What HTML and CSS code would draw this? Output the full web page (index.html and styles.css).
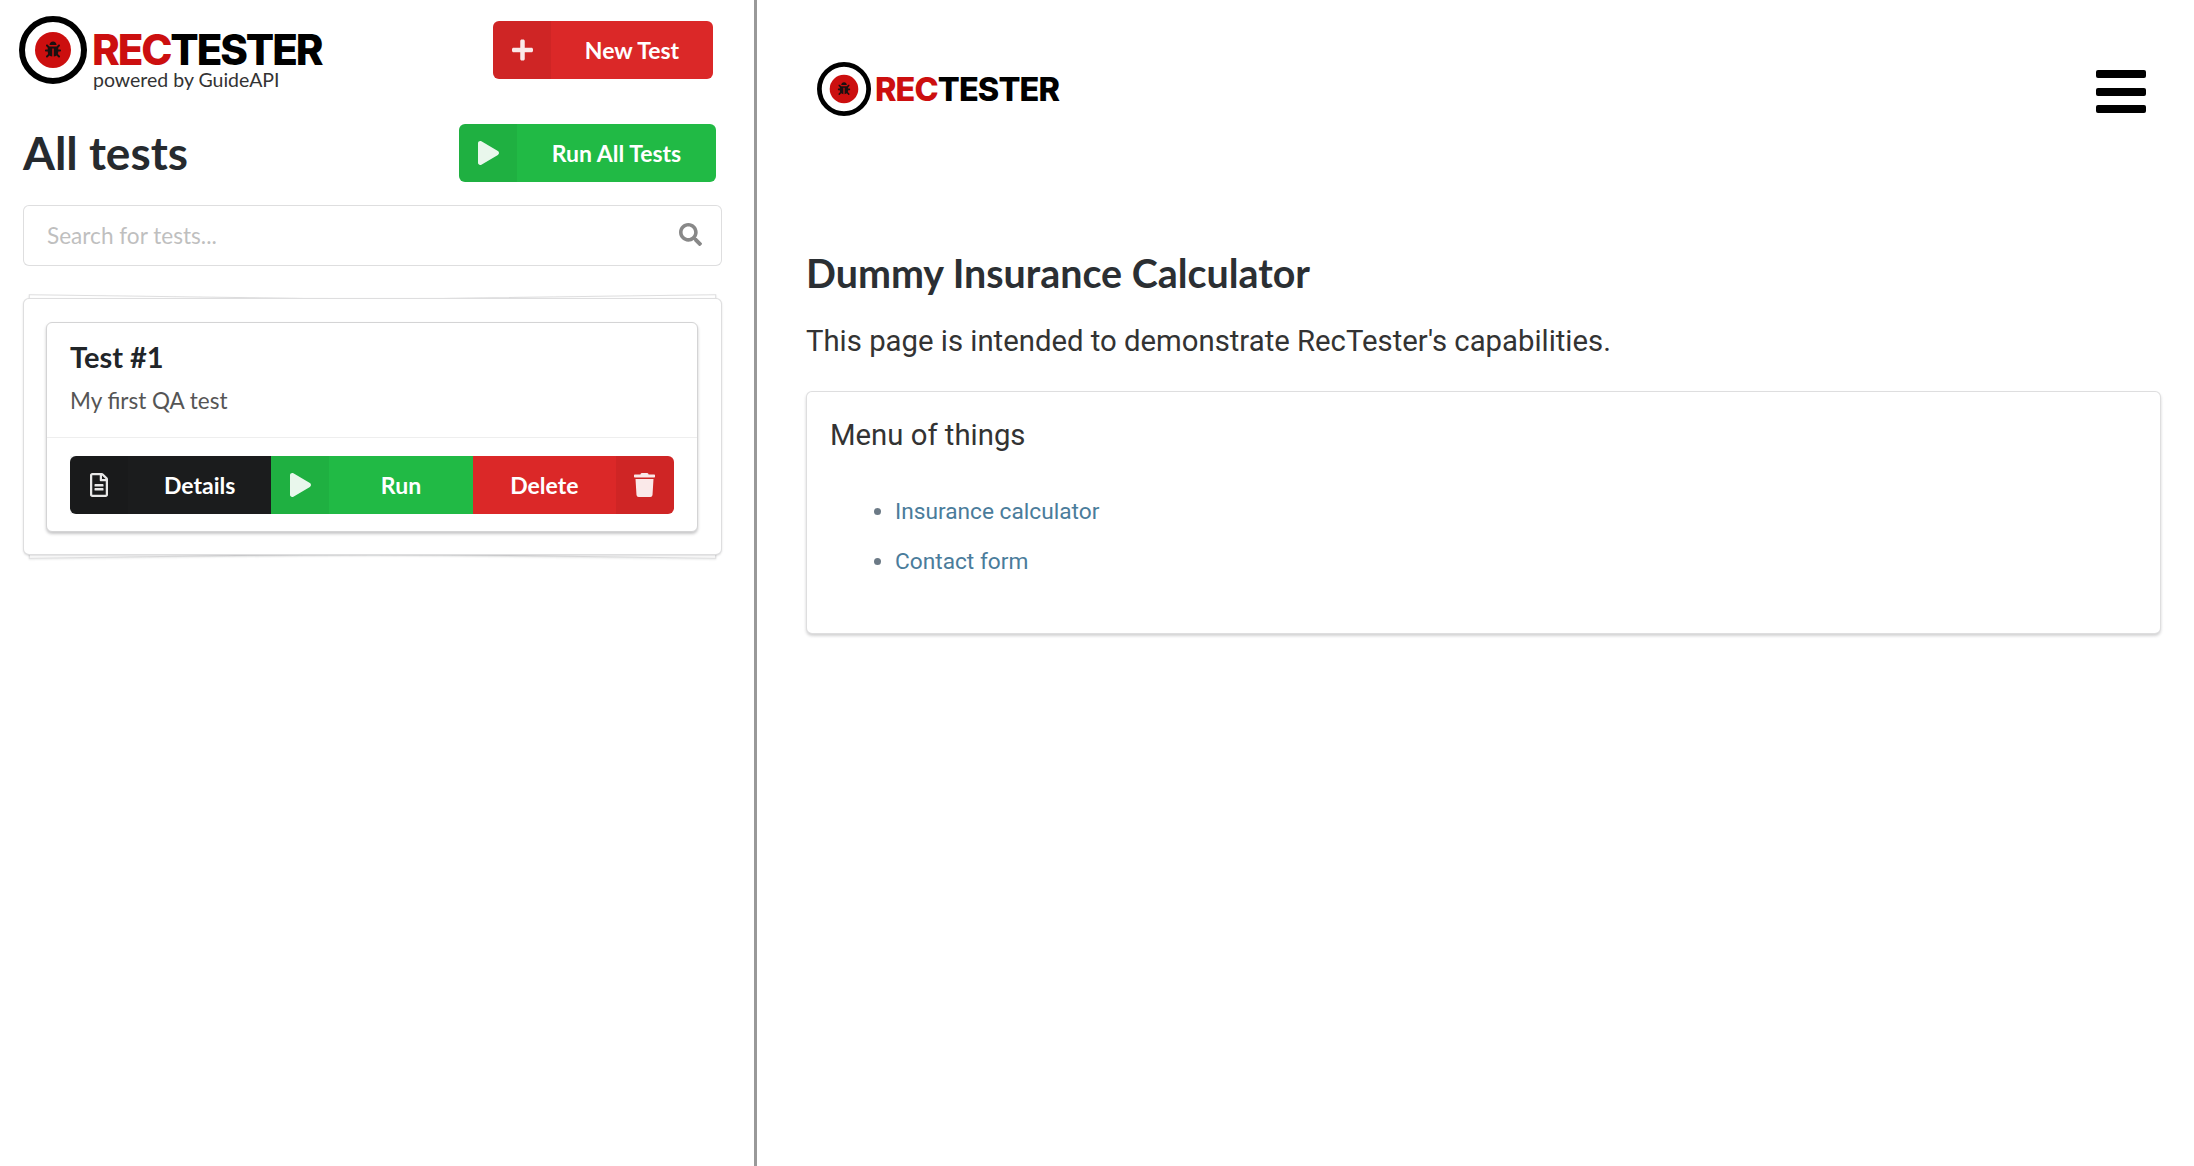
FILE: index.html
```html
<!DOCTYPE html>
<html lang="en">
<head>
    <meta charset="UTF-8">
    <meta name="viewport" content="width=device-width, initial-scale=1.0">
    <title>RecTester</title>
    <link rel="stylesheet" href="styles.css">
</head>
<body>

    <svg class="sprites" aria-hidden="true">
        <symbol id="i-plus" viewBox="0 0 448 512"><path d="M416 208H272V64c0-17.67-14.33-32-32-32h-32c-17.67 0-32 14.33-32 32v144H32c-17.67 0-32 14.33-32 32v32c0 17.67 14.33 32 32 32h144v144c0 17.67 14.33 32 32 32h32c17.67 0 32-14.33 32-32V304h144c17.67 0 32-14.33 32-32v-32c0-17.67-14.33-32-32-32z"/></symbol>
        <symbol id="i-play" viewBox="0 0 448 512"><path d="M424.4 214.7L72.4 6.6C43.8-10.3 0 6.1 0 47.9V464c0 37.5 40.7 60.1 72.4 41.3l352-208c31.4-18.5 31.5-64.1 0-82.6z"/></symbol>
        <symbol id="i-trash" viewBox="0 0 448 512"><path d="M432 32H312l-9.4-18.7A24 24 0 0 0 281.1 0H166.8a23.72 23.72 0 0 0-21.4 13.3L136 32H16A16 16 0 0 0 0 48v32a16 16 0 0 0 16 16h416a16 16 0 0 0 16-16V48a16 16 0 0 0-16-16zM53.2 467a48 48 0 0 0 47.9 45h245.8a48 48 0 0 0 47.9-45L416 128H32z"/></symbol>
        <symbol id="i-search" viewBox="0 0 512 512"><path d="M505 442.7L405.3 343c-4.5-4.5-10.6-7-17-7H372c27.6-35.3 44-79.7 44-128C416 93.1 322.9 0 208 0S0 93.1 0 208s93.1 208 208 208c48.3 0 92.7-16.4 128-44v16.3c0 6.4 2.5 12.5 7 17l99.7 99.7c9.4 9.4 24.6 9.4 33.9 0l28.3-28.3c9.4-9.4 9.4-24.6.1-34zM208 336c-70.7 0-128-57.2-128-128 0-70.7 57.2-128 128-128 70.7 0 128 57.2 128 128 0 70.7-57.2 128-128 128z"/></symbol>
        <symbol id="i-file" viewBox="0 0 384 512"><path d="M288 248v28c0 6.6-5.4 12-12 12H108c-6.6 0-12-5.4-12-12v-28c0-6.6 5.4-12 12-12h168c6.6 0 12 5.4 12 12zm-12 72H108c-6.6 0-12 5.4-12 12v28c0 6.6 5.4 12 12 12h168c6.6 0 12-5.4 12-12v-28c0-6.6-5.4-12-12-12zm108-188.1V464c0 26.5-21.5 48-48 48H48c-26.5 0-48-21.5-48-48V48C0 21.5 21.5 0 48 0h204.1C264.8 0 277 5.1 286 14.1L369.9 98c9 8.9 14.1 21.2 14.1 33.9zm-128-80V128h76.1L256 51.9zM336 464V176H232c-13.3 0-24-10.7-24-24V48H48v416h288z"/></symbol>
        <symbol id="i-logo" viewBox="0 0 68 68">
            <circle cx="34" cy="34" r="31" fill="none" stroke="#000" stroke-width="6"/>
            <circle cx="34" cy="34" r="18" fill="#cc0f0f"/>
            <svg x="26" y="25" width="16" height="17" viewBox="0 0 512 512"><path fill="#1a1010" d="M511.988 288.9c-.478 17.43-15.217 31.1-32.653 31.1H424v16c0 21.864-4.882 42.584-13.6 61.145l60.228 60.228c12.496 12.497 12.496 32.758 0 45.255-12.498 12.497-32.759 12.496-45.256 0l-54.736-54.736C345.886 467.965 314.351 480 280 480V236c0-6.627-5.373-12-12-12h-24c-6.627 0-12 5.373-12 12v244c-34.351 0-65.886-12.035-90.636-32.108l-54.736 54.736c-12.498 12.497-32.759 12.496-45.256 0-12.496-12.497-12.496-32.758 0-45.255l60.228-60.228C92.882 378.584 88 357.864 88 336v-16H32.666C15.23 320 .491 306.33.013 288.9-.484 270.816 14.028 256 32 256h56v-58.745l-46.628-46.628c-12.496-12.497-12.496-32.758 0-45.255 12.498-12.497 32.758-12.497 45.256 0L141.255 160h229.489l54.627-54.627c12.498-12.497 32.758-12.497 45.256 0 12.496 12.497 12.496 32.758 0 45.255L424 197.255V256h56c17.972 0 32.484 14.816 31.988 32.9zM257 0c-61.856 0-112 50.144-112 112h224C369 50.144 318.856 0 257 0z"/></svg>
        </symbol>
    </svg>

    <aside class="sidebar">
        <div class="sidebar-top">
            <div class="logo">
                <svg class="logo-mark"><use href="#i-logo"/></svg>
                <div class="logo-text">
                    <div class="logo-name"><span class="logo-red">REC</span>TESTER</div>
                    <div class="logo-sub">powered by GuideAPI</div>
                </div>
            </div>
            <a class="btn btn-red btn-new">
                <span class="btn-icon"><svg class="icon icon-plus"><use href="#i-plus"/></svg></span>
                <span class="btn-label">New Test</span>
            </a>
        </div>

        <div class="title-row">
            <h1 class="page-title">All tests</h1>
            <a class="btn btn-green btn-all">
                <span class="btn-icon"><svg class="icon icon-play"><use href="#i-play"/></svg></span>
                <span class="btn-label">Run All Tests</span>
            </a>
        </div>

        <div class="search">
            <input class="search-input" type="text" placeholder="Search for tests...">
            <svg class="search-icon"><use href="#i-search"/></svg>
        </div>

        <div class="pile">
            <div class="card">
                <div class="card-body">
                    <div class="card-title">Test #1</div>
                    <div class="card-desc">My first QA test</div>
                </div>
                <div class="card-actions">
                    <a class="btn btn-black btn-part first">
                        <span class="btn-icon"><svg class="icon icon-file"><use href="#i-file"/></svg></span>
                        <span class="btn-label">Details</span>
                    </a>
                    <a class="btn btn-green btn-part">
                        <span class="btn-icon"><svg class="icon icon-play"><use href="#i-play"/></svg></span>
                        <span class="btn-label">Run</span>
                    </a>
                    <a class="btn btn-red btn-part last">
                        <span class="btn-label">Delete</span>
                        <span class="btn-icon right"><svg class="icon icon-trash"><use href="#i-trash"/></svg></span>
                    </a>
                </div>
            </div>
        </div>
    </aside>

    <main class="preview">
        <header class="preview-nav">
            <div class="logo logo-small">
                <svg class="logo-mark" viewBox="0 0 68 68"><use href="#i-logo"/></svg>
                <div class="logo-name"><span class="logo-red">REC</span>TESTER</div>
            </div>
            <div class="burger"><span></span><span></span><span></span></div>
        </header>

        <h2 class="preview-title">Dummy Insurance Calculator</h2>
        <p class="preview-lead">This page is intended to demonstrate RecTester's capabilities.</p>

        <section class="menu-box">
            <h3 class="menu-title">Menu of things</h3>
            <ul class="menu-list">
                <li><a>Insurance calculator</a></li>
                <li><a>Contact form</a></li>
            </ul>
        </section>
    </main>

</body>
</html>
```

FILE: styles.css
```css
* {
    box-sizing: border-box;
}
html, body {
    height: 100%;
}
body {
    margin: 0;
    display: flex;
    overflow: hidden;
    background: #fff;
    color: #212529;
    font-family: "Lato", sans-serif;
}
.sprites {
    display: none;
}

/* left column */
.sidebar {
    width: 757px;
    flex: none;
    padding: 16px 32px 0 23px;
    border-right: 3px solid #999;
    isolation: isolate;
}
.sidebar-top {
    display: flex;
    justify-content: space-between;
    align-items: flex-start;
    margin-left: -4px;
    padding-right: 9px;
}
.logo {
    display: flex;
    align-items: flex-start;
}
.logo-mark {
    width: 68px;
    height: 68px;
    flex: none;
}
.logo-text {
    margin-left: 5px;
    padding-top: 14px;
}
.logo-name {
    font-family: "Inter", sans-serif;
    font-weight: 800;
    font-size: 42px;
    line-height: 39px;
    letter-spacing: -2.1px;
    color: #000;
}
.logo-red {
    color: #cc0f0f;
}
.logo-sub {
    margin-left: 1px;
    font-size: 19.5px;
    line-height: 22px;
    color: #333;
}

.btn {
    display: inline-flex;
    align-items: center;
    height: 58px;
    font-weight: 700;
    font-size: 23px;
    color: #fff;
    border-radius: 6px;
    white-space: nowrap;
}
.btn-red {
    background: #db2828;
}
.btn-green {
    background: #21ba45;
}
.btn-black {
    background: #1b1c1d;
}
.btn-icon {
    width: 58px;
    height: 100%;
    flex: none;
    display: flex;
    align-items: center;
    justify-content: center;
    background: rgba(0, 0, 0, 0.05);
    border-radius: 6px 0 0 6px;
}
.btn-icon.right {
    border-radius: 0 6px 6px 0;
}
.btn-label {
    flex: 1;
    text-align: center;
}
.btn-new {
    margin-top: 5px;
    width: 220px;
}
.btn-all {
    width: 257px;
}
.icon {
    fill: #fff;
    opacity: 0.9;
}
.icon-plus {
    width: 21px;
    height: 24px;
}
.icon-play {
    width: 21px;
    height: 24px;
}
.icon-file {
    width: 18px;
    height: 24px;
}
.icon-trash {
    width: 21px;
    height: 24px;
}

.title-row {
    display: flex;
    justify-content: space-between;
    align-items: center;
    margin-top: 33px;
    padding-right: 6px;
}
.page-title {
    margin: 0;
    font-size: 46px;
    line-height: 58px;
    font-weight: 700;
    color: #262a2e;
}

.search {
    position: relative;
    margin-top: 23px;
}
.search-input {
    display: block;
    width: 100%;
    height: 61px;
    padding: 0 60px 0 23px;
    border: 1px solid rgba(34, 36, 38, 0.15);
    border-radius: 6px;
    outline: none;
    font-family: "Lato", sans-serif;
    font-size: 22.6px;
    color: #333;
}
.search-input::placeholder {
    color: #bfbfbf;
}
.search-icon {
    position: absolute;
    top: 18px;
    right: 20px;
    width: 23px;
    height: 23px;
    fill: #888;
}

/* piled segment */
.pile {
    position: relative;
    margin-top: 32px;
    padding: 23px 23px 22px 22px;
    background: #fff;
    border: 1px solid rgba(34, 36, 38, 0.15);
    border-radius: 6px;
    box-shadow: 0 1px 2px rgba(34, 36, 38, 0.15);
}
.pile::before, .pile::after {
    content: "";
    position: absolute;
    z-index: -1;
    top: 0;
    bottom: 0;
    left: 3px;
    right: 3px;
    background: #fff;
    border: 1px solid rgba(34, 36, 38, 0.15);
    box-shadow: 0 1px 2px rgba(34, 36, 38, 0.1);
}
.pile::before {
    transform: rotate(-0.8deg);
}
.pile::after {
    transform: rotate(0.8deg);
}

.card {
    background: #fff;
    border: 1px solid #d4d4d5;
    border-radius: 6px;
    box-shadow: 0 2px 3px rgba(34, 36, 38, 0.25);
}
.card-body {
    padding: 16px 23px 0;
    height: 115px;
    border-bottom: 1px solid #eeeeee;
}
.card-title {
    font-size: 29px;
    line-height: 36px;
    font-weight: 700;
    color: #212529;
}
.card-desc {
    margin-top: 12px;
    font-size: 22.5px;
    line-height: 28px;
    color: #555;
}
.card-actions {
    display: flex;
    padding: 18px 23px 17px;
}
.btn-part {
    flex: 1;
    border-radius: 0;
}
.btn-part .btn-icon {
    border-radius: 0;
}
.btn-part.first {
    border-radius: 6px 0 0 6px;
}
.btn-part.last {
    border-radius: 0 6px 6px 0;
}
.btn-part.last .btn-icon {
    border-radius: 0 6px 6px 0;
}

/* right column */
.preview {
    flex: 1;
    min-width: 0;
    padding: 0 33px 0 49px;
    font-family: "Roboto", sans-serif;
}
.preview-nav {
    display: flex;
    justify-content: space-between;
    align-items: flex-start;
    height: 247px;
    padding: 62px 15px 0 11px;
}
.logo-small {
    align-items: center;
}
.logo-small .logo-mark {
    width: 54px;
    height: 54px;
}
.logo-small .logo-name {
    margin: 2px 0 0 4px;
    font-size: 32.5px;
    line-height: 36px;
    letter-spacing: -0.9px;
}
.burger {
    display: flex;
    flex-direction: column;
    gap: 9.5px;
    margin-top: 8px;
    width: 50px;
}
.burger span {
    display: block;
    height: 8px;
    background: #000;
    border-radius: 2px;
}
.preview-title {
    margin: 0;
    font-family: "Lato", sans-serif;
    font-size: 39.4px;
    line-height: 52px;
    font-weight: 700;
    color: #2b2f33;
}
.preview-lead {
    margin: 24px 0 0;
    font-size: 29.3px;
    line-height: 36px;
    color: #333;
}
.menu-box {
    height: 243px;
    margin-top: 32px;
    padding: 25px 24px 25px 23px;
    background: #fff;
    border: 1px solid rgba(34, 36, 38, 0.15);
    border-radius: 6px;
    box-shadow: 0 2px 3px rgba(34, 36, 38, 0.2);
}
.menu-title {
    margin: 0;
    font-size: 29.3px;
    line-height: 36px;
    font-weight: 400;
    color: #333;
}
.menu-list {
    margin: 44px 0 0;
    padding-left: 65px;
    font-size: 22.7px;
    line-height: 30px;
    color: #6c7a86;
}
.menu-list li {
    margin-bottom: 20px;
}
.menu-list a {
    color: #4a7c9b;
}
```
